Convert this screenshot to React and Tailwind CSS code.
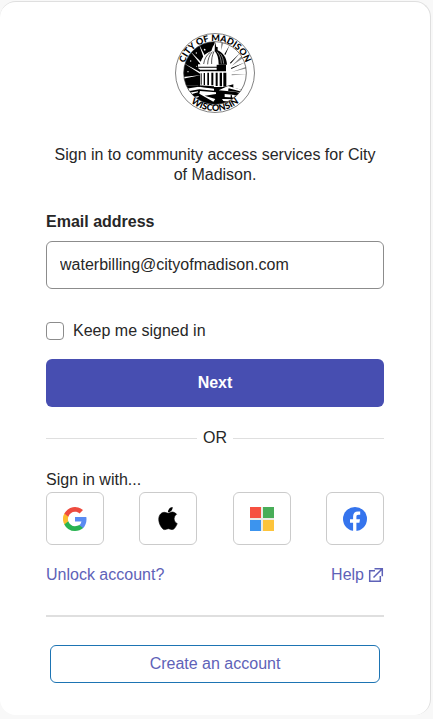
import React, { useState } from 'react';

const linkColor = 'text-[#5e62b8] hover:underline';

function CitySeal() {
  return (
    <svg viewBox="29 28 240 240" className="size-20" role="img" aria-label="City of Madison Wisconsin">
      <defs>
        <path id="seal-top" d="M53 148a96 96 0 0 1 192 0" />
        <path id="seal-bottom" d="M35 148a114 114 0 0 0 228 0" />
        <clipPath id="seal-inner">
          <circle cx="149" cy="148" r="94" />
        </clipPath>
      </defs>
      <circle cx="149" cy="148" r="118.5" fill="#fff" stroke="#444" strokeWidth="2" />
      <g clipPath="url(#seal-inner)">
        {/* night sky with rays */}
        <path d="M50 50h98v36l-40 40v60H50z" />
        <path d="M74 82l40 40-4 5zM101 62l21 40-6 3zM54 118l56 30v6zM50 160l58-6-57 12z" fill="#fff" />
        <g fill="#fff">
          <circle cx="93" cy="88" r="2" />
          <circle cx="118" cy="78" r="2.500" />
          <circle cx="76" cy="112" r="2" />
          <circle cx="68" cy="144" r="2" />
          <circle cx="94" cy="128" r="1.500" />
        </g>
        {/* daylight rays */}
        <path d="M193 64l-13 30-3-2zM224 88l-28 32-2-3zM240 116l-42 20-1-3z" />
        <path d="M174 58l-7 22 1-24zM234 102l-36 26 32-32zM245 134l-46 11 45-16zM245 152l-46 3v-3z" fill="#888" />
        {/* wings and ground */}
        <path d="M50 186h58l74 2 22-6v10l42 10v60H50z" />
        <path d="M58 196l42-7 46 6v6l-44-4-42 7zM104 202l48 4v5l-34 5 32 10-6 8-42-24zM66 208l32-5v3l-28 8zM76 222l24-5v3l-18 7z" fill="#fff" />
        <path d="M160 200l28-13 54 15-4 8-30-6zM178 211l52 5-3 7-49-3zM170 226l46 1-8 9-34-4z" fill="#fff" />
        <path d="M190 194l34 9v3l-36-5zM196 214l4 1v10h-4zM208 215l4 1v9h-4z" />
        {/* drum */}
        <path d="M98 122h86l4 9-5 7v52h-79v-52l-6-5z" fill="#fff" />
        <path d="M98 129h80v3H98zM102 138h80v5h-80zM154 122h28v16h-28z" />
        <path d="M106 149h3v34h-3zM115 148h4v36h-4zM126 147h5v38h-5zM138 147h6v38h-6zM151 147h6v40h-6zM163 147h7v41h-7zM174 147h9v42h-9z" />
        <path d="M98 185l48 3v4l-48-3z" />
        {/* dome */}
        <path d="M149 58l5 14 4 10c15 5 24 20 25 41h-78c2-20 13-34 33-41l4-12z" fill="#fff" />
        <path d="M149 54l4 16h4v10c16 7 27 22 28 43h-25c0-19-4-32-12-41z" />
        <path d="M155 84c9 10 12 22 13 36M165 90c7 9 9 19 10 30" fill="none" stroke="#fff" strokeWidth="1.500" />
        <path d="M135 86c-12 8-18 21-20 35M141 84c-9 11-14 24-14 38M146 83c-6 13-8 26-7 38" fill="none" stroke="#000" strokeWidth="2" />
      </g>
      <circle cx="149" cy="148" r="94" fill="none" stroke="#333" strokeWidth="2" />
      <g className="font-[Lato,sans-serif] font-black" fontSize="27" textAnchor="middle">
        <text>
          <textPath href="#seal-top" startOffset="50%">CITY OF MADISON</textPath>
        </text>
        <text>
          <textPath href="#seal-bottom" startOffset="50%">WISCONSIN</textPath>
        </text>
      </g>
    </svg>
  );
}

function GoogleIcon() {
  return (
    <svg viewBox="0 0 24 24" className="size-6">
      <path fill="#5a8bf2" d="M23.5 12.3c0-.8-.1-1.6-.2-2.3H12v4.6h6.5a5.5 5.5 0 0 1-2.4 3.6v3h3.9c2.2-2.1 3.5-5.1 3.5-8.9z" />
      <path fill="#28b351" d="M12 24c3.2 0 6-1.1 8-2.9l-3.9-3c-1.1.7-2.5 1.2-4.1 1.2-3.1 0-5.8-2.1-6.7-5H1.3v3.1A12 12 0 0 0 12 24z" />
      <path fill="#fbbc2e" d="M5.3 14.3a7.2 7.2 0 0 1 0-4.6V6.6h-4a12 12 0 0 0 0 10.8z" />
      <path fill="#ee4b3e" d="M12 4.7c1.8 0 3.4.6 4.6 1.8L20 3.1A12 12 0 0 0 1.3 6.6l4 3.1c.9-2.9 3.6-5 6.7-5z" />
    </svg>
  );
}

function AppleIcon() {
  return (
    <svg viewBox="0 0 24 24" className="size-6">
      <path d="M12.2 6.3c-.9 0-2.3-1-3.8-1-1.9 0-3.7 1.1-4.700 2.900-2 3.500-.5 8.700 1.400 11.500 1 1.400 2.100 2.900 3.600 2.900 1.500-.1 2-.9 3.700-.9s2.200.9 3.700.9c1.600 0 2.600-1.400 3.500-2.800 1.100-1.600 1.600-3.200 1.600-3.300 0 0-3.100-1.200-3.100-4.700 0-3 2.400-4.400 2.500-4.500-1.400-2-3.500-2.200-4.300-2.300-1.900-.1-3.200 1.300-4.100 1.300z" stroke="#000" strokeWidth=".6" />
      <path d="M15.400 3.800c.8-1 1.300-2.300 1.200-3.800-1.200.1-2.600.8-3.400 1.800-.7.900-1.400 2.300-1.200 3.500 1.300.1 2.600-.6 3.400-1.500z" />
    </svg>
  );
}

function MicrosoftIcon() {
  return (
    <svg viewBox="0 0 24 24" className="size-6">
      <path fill="#eceae6" d="M0 0h24v24H0z" />
      <path fill="#f65040" d="M0 0h11v11H0z" />
      <path fill="#48ad58" d="M13 0h11v11H13z" />
      <path fill="#3c94ee" d="M0 13h11v11H0z" />
      <path fill="#fdc43b" d="M13 13h11v11H13z" />
    </svg>
  );
}

function FacebookIcon() {
  return (
    <svg viewBox="0 0 24 24" className="size-6">
      <circle cx="12" cy="12" r="12" fill="#3574ed" />
      <path fill="#fff" d="M10.100 24v-8.300H7v-3.500h3.100V9.500c0-3.300 1.700-5.100 4.800-5.100 1 0 1.900.1 2.300.2v3.100h-1.700c-1.700 0-2.100.8-2.100 2.200v2.300h3.600l-.6 3.500h-3V24a12 12 0 0 1-3.300 0z" />
    </svg>
  );
}

const providers = [
  { name: 'Google', Icon: GoogleIcon },
  { name: 'Apple', Icon: AppleIcon },
  { name: 'Microsoft', Icon: MicrosoftIcon },
  { name: 'Facebook', Icon: FacebookIcon },
];

export default function App() {
  const [email, setEmail] = useState('waterbilling@cityofmadison.com');
  const [keepSignedIn, setKeepSignedIn] = useState(false);

  const handleSubmit = (e) => {
    e.preventDefault();
  };

  return (
    <div className="min-h-screen bg-[#f8f8f8] pt-px pr-0.5 font-['Liberation_Sans',Arial,sans-serif] text-base leading-5 text-[#272727]">
      <main className="rounded-2xl border-t border-r border-[#dfdfdf] bg-white px-[46px] pt-[31px] pb-8">
        <div className="flex justify-center">
          <CitySeal />
        </div>
        <h1 className="mt-8 text-center">Sign in to community access services for City of Madison.</h1>

        <form onSubmit={handleSubmit} className="mt-[27px] flex flex-col">
          <label htmlFor="email" className="font-bold">Email address</label>
          <input
            id="email"
            type="email"
            value={email}
            onChange={(e) => setEmail(e.target.value)}
            className="mt-[9px] h-12 w-full rounded-md border border-[#8c8c8c] px-[13px]"
          />
          <label className="mt-8 flex items-center gap-[9px]">
            <input
              type="checkbox"
              checked={keepSignedIn}
              onChange={(e) => setKeepSignedIn(e.target.checked)}
              className="size-[18px] appearance-none rounded border border-[#8c8c8c] checked:bg-[#474eb1]"
            />
            Keep me signed in
          </label>
          <button type="submit" className="mt-[18px] h-12 rounded-md bg-[#474eb1] font-bold text-white">Next</button>
        </form>

        <div className="mt-[21px] flex items-center gap-1.5">
          <div className="h-px flex-1 bg-[#dfdfdf]" />
          <span>OR</span>
          <div className="h-px flex-1 bg-[#dfdfdf]" />
        </div>

        <p className="mt-[22px]">Sign in with...</p>
        <div className="mt-0.5 flex justify-between">
          {providers.map(({ name, Icon }) => (
            <button
              key={name}
              type="button"
              aria-label={name}
              className="flex h-[53px] w-[58px] items-center justify-center rounded-md border border-[#cbcbcb]"
            >
              <Icon />
            </button>
          ))}
        </div>

        <div className="mt-5 flex justify-between">
          <a href="#" className={linkColor}>Unlock account?</a>
          <a href="#" className={`flex items-center gap-1 ${linkColor}`}>
            Help
            <svg viewBox="0 0 16 16" className="size-4" fill="none" stroke="currentColor" strokeWidth="1.5">
              <path d="M7 3.700H1.700v10.600h10.600V9M5.500 10.500l9-9M6.500 1.700h7.800v7.500" />
            </svg>
          </a>
        </div>

        <hr className="mt-[30px] border-t-2 border-[#dfdfdf]" />

        <div className="px-1 pt-7">
          <button type="button" className={`h-[38px] w-full rounded-md border border-[#1d74b3] ${linkColor}`}>
            Create an account
          </button>
        </div>
      </main>
    </div>
  );
}
